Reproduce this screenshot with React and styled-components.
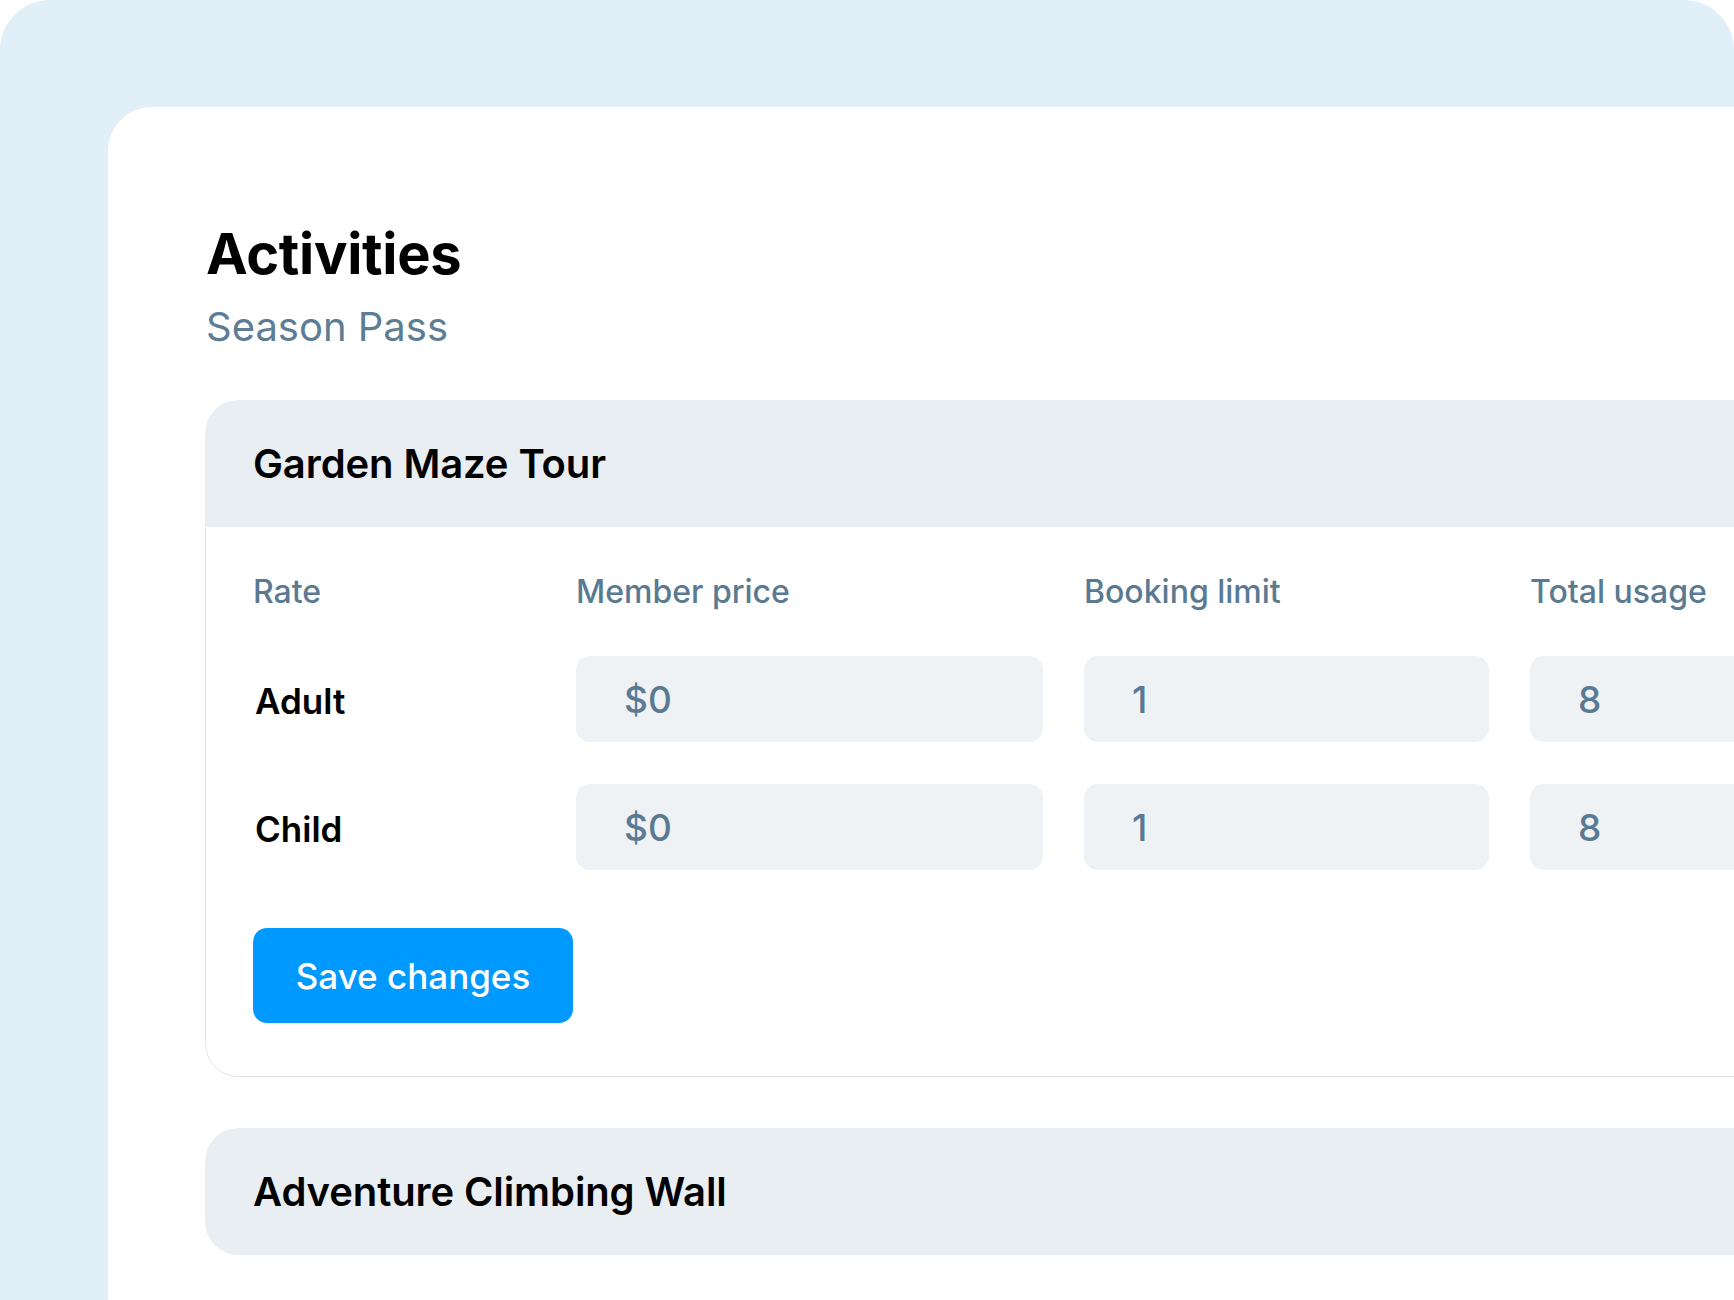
import styled, {createGlobalStyle} from 'styled-components';

const GlobalStyle = createGlobalStyle`
  html, body {
    margin: 0;
    padding: 0;
    background: #ffffff;
  }

  body {
    font-family: Inter, 'Noto Sans', 'Liberation Sans', sans-serif;
    -webkit-font-smoothing: antialiased;
  }
`;

const rates = [
  {name: 'Adult', price: '$0', limit: '1', usage: '8'},
  {name: 'Child', price: '$0', limit: '1', usage: '8'},
];

export default function App() {
  return (
    <>
      <GlobalStyle />
      <Frame>
        <Panel>
          <Title>Activities</Title>
          <Subtitle>Season Pass</Subtitle>

          <CardList>
            <Card>
              <CardHeader>
                <CardTitle>Garden Maze Tour</CardTitle>
              </CardHeader>
              <CardBody>
                <RateGrid>
                  <ColumnLabel>Rate</ColumnLabel>
                  <ColumnLabel>Member price</ColumnLabel>
                  <ColumnLabel>Booking limit</ColumnLabel>
                  <ColumnLabel>Total usage</ColumnLabel>

                  {rates.map((rate) => (
                    <Row key={rate.name}>
                      <RateName>{rate.name}</RateName>
                      <Field>{rate.price}</Field>
                      <Field>{rate.limit}</Field>
                      <Field>{rate.usage}</Field>
                    </Row>
                  ))}
                </RateGrid>

                <SaveButton type="button">Save changes</SaveButton>
              </CardBody>
            </Card>

            <Card>
              <CardHeader $collapsed>
                <CardTitle>Adventure Climbing Wall</CardTitle>
              </CardHeader>
            </Card>
          </CardList>
        </Panel>
      </Frame>
    </>
  );
}

const Frame = styled.div`
  width: 1734px;
  height: 1300px;
  overflow: hidden;
  box-sizing: border-box;
  padding: 107px 0 0 108px;
  background: #e1eff9;
  border-radius: 50px 50px 0 0;
`;

const Panel = styled.main`
  width: 2000px;
  height: 1400px;
  box-sizing: border-box;
  padding: 113px 0 0 97px;
  background: #ffffff;
  border-radius: 44px 0 0 0;
`;

const Title = styled.h1`
  margin: 0 0 0 1px;
  font-size: 56px;
  line-height: 68px;
  font-weight: 700;
  letter-spacing: -0.3px;
  color: #000000;
`;

const Subtitle = styled.p`
  margin: 15px 0 0 1px;
  font-size: 40px;
  line-height: 48px;
  font-weight: 400;
  color: #5d7d95;
`;

const CardList = styled.div`
  display: flex;
  flex-direction: column;
  gap: 51px;
  margin-top: 49px;
`;

const Card = styled.section`
  width: 1800px;
  border-radius: 33px;
  overflow: hidden;
`;

const CardHeader = styled.header`
  height: 127px;
  display: flex;
  align-items: center;
  padding: 0 48px;
  background: #e8eef2;
  border-radius: ${({$collapsed}) => ($collapsed ? '33px' : '33px 33px 0 0')};
`;

const CardTitle = styled.h2`
  margin: 0;
  font-size: 40px;
  font-weight: 600;
  color: #000000;
  letter-spacing: -0.1px;
`;

const CardBody = styled.div`
  padding: 43px 47px 53px;
  border: 1px solid #dde2e6;
  border-top: none;
  border-radius: 0 0 33px 33px;
`;

const RateGrid = styled.div`
  display: grid;
  grid-template-columns: 282px 467px 405px 405px;
  column-gap: 41px;
  row-gap: 42px;
  align-items: center;
`;

const Row = styled.div`
  display: contents;
`;

const ColumnLabel = styled.div`
  font-size: 32px;
  line-height: 44px;
  font-weight: 500;
  color: #5a7a92;
`;

const RateName = styled.div`
  padding: 3px 0 0 2px;
  font-size: 35px;
  font-weight: 600;
  color: #000000;
`;

const Field = styled.div`
  height: 86px;
  display: flex;
  align-items: center;
  padding: 0 48px;
  background: #eef2f5;
  border-radius: 14px;
  font-size: 37px;
  font-weight: 500;
  color: #5a7a92;
`;

const SaveButton = styled.button`
  margin-top: 58px;
  width: 320px;
  height: 95px;
  padding: 0;
  border: none;
  border-radius: 14px;
  background: #0099ff;
  color: #ffffff;
  font-family: inherit;
  font-size: 35px;
  font-weight: 500;
  cursor: pointer;
`;
